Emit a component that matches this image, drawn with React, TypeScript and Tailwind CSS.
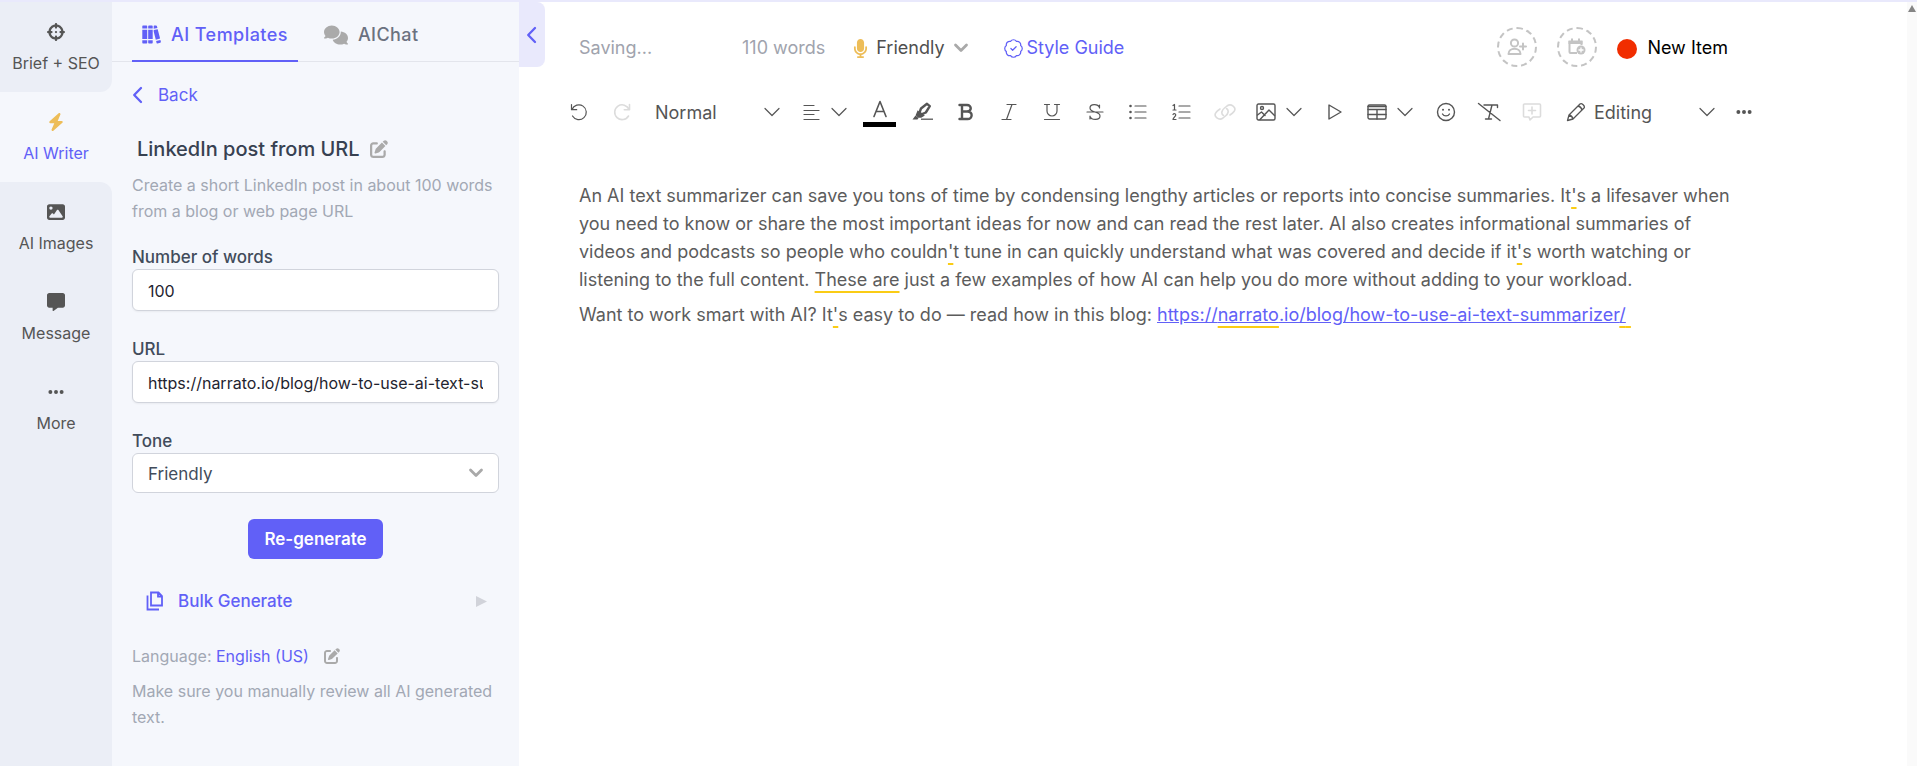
import { useState, type ReactNode } from "react";
import { FaBolt, FaComments, FaCrosshairs, FaImage, FaMessage, FaEllipsis, FaMicrophone } from "react-icons/fa6";
import { LuBadgeCheck } from "react-icons/lu";

function Line({ children, w = 18, h = 18, sw = 1.2, className = "" }: { children: ReactNode; w?: number; h?: number; sw?: number; className?: string }) {
  return (
    <svg width={w} height={h} viewBox={`0 0 ${w} ${h}`} fill="none" stroke="currentColor" strokeWidth={sw} strokeLinecap="round" strokeLinejoin="round" className={`shrink-0 ${className}`} aria-hidden="true">
      {children}
    </svg>
  );
}

const ThinChevron = () => (
  <Line w={16} h={10}>
    <path d="M1 1.5l7 7 7-7" />
  </Line>
);

const BoldChevron = () => (
  <Line w={16} h={10} sw={2.8} className="text-[#a9a9a9]">
    <path d="M2.500 2l5.500 5.500L13.500 2" />
  </Line>
);

const LeftChevron = () => (
  <Line w={11} h={18} sw={2.3}>
    <path d="M9 2L2.200 9 9 16" />
  </Line>
);

const EditIcon = ({ size }: { size: number }) => (
  <svg width={size} height={size} viewBox="0 0 512 512" fill="currentColor" className="shrink-0" aria-hidden="true">
    <path d="M471.6 21.7c-21.9-21.9-57.3-21.9-79.2 0L362.3 51.7l97.9 97.9 30.1-30.1c21.9-21.9 21.9-57.3 0-79.2L471.6 21.7zM172.4 241.7c-6.1 6.1-10.8 13.6-13.5 21.9l-29.6 88.8c-2.9 8.6-.6 18.100 5.800 24.600s15.900 8.700 24.600 5.800l88.800-29.600c8.200-2.700 15.700-7.400 21.900-13.500L437.700 172.300 339.700 74.300 172.400 241.700zM96 64C43 64 0 107 0 160V416c0 53 43 96 96 96H352c53 0 96-43 96-96V320c0-17.700-14.300-32-32-32s-32 14.300-32 32v96c0 17.700-14.300 32-32 32H96c-17.700 0-32-14.300-32-32V160c0-17.700 14.300-32 32-32h96c17.700 0 32-14.300 32-32s-14.300-32-32-32H96z" />
  </svg>
);

const Books = () => (
  <svg width="19" height="19" viewBox="0 0 19 19" fill="currentColor" className="shrink-0" aria-hidden="true">
    <path d="M1 .5h3.500q.7 0 .7.700V3.500H.3V1.200Q.3.500 1 .5zM.3 4.800h4.900v9.200H.3zM.3 15.300h4.900v2.500q0 .7-.7.700H1q-.7 0-.7-.7z" />
    <path d="M7 .5h3q.7 0 .7.700V3.500H6.200V1.200Q6.200.5 7 .5zM6.200 4.800h4.500v9.200H6.200zM6.200 15.300h4.500v2.500q0 .7-.7.700H7q-.8 0-.8-.7z" />
    <path d="M12.200.6l1.800-.2q.7 0 .9.700l.5 2-3.700.6V1.200q0-.6.5-.6zM11.700 5l4-.8 2.400 9.400-4.300 1.100L11.700 6.500zM14.100 15.900l4.300-1 .5 1.900q.1.700-.6.900l-2.800.8q-.7.100-.9-.6z" />
  </svg>
);

const CopyPages = () => (
  <Line w={18} h={20} sw={1.8} className="text-[#6160f7]">
    <path d="M5 1.500h7.500L16 5v9.500H5zM12 1.500V5.500h4" strokeLinejoin="miter" />
    <path d="M1.500 4.500V18.500H13" strokeLinecap="butt" strokeLinejoin="miter" />
  </Line>
);

function Tool({ label, children, className = "", disabled = false }: { label: string; children: ReactNode; className?: string; disabled?: boolean }) {
  return (
    <button type="button" aria-label={label} disabled={disabled} className={`flex h-8 shrink-0 items-center justify-center ${disabled ? "text-[#dcdcdc]" : ""} ${className}`}>
      {children}
    </button>
  );
}

const railItems = [
  { label: "Brief + SEO", icon: <FaCrosshairs size={18} />, shape: "rounded-br-xl" },
  { label: "AI Writer", icon: <FaBolt size={18} className="text-[#edbd58]" />, shape: "" },
  { label: "AI Images", icon: <FaImage size={18} />, shape: "rounded-tr-xl" },
  { label: "Message", icon: <FaMessage size={18} />, shape: "" },
  { label: "More", icon: <FaEllipsis size={18} />, shape: "" },
];

function Rail() {
  return (
    <nav className="flex w-28 shrink-0 flex-col bg-[#f5f7fc]">
      {railItems.map((item) => {
        const active = item.label === "AI Writer";
        return (
          <button key={item.label} type="button" className={`flex h-[90px] shrink-0 flex-col items-center gap-2.5 pt-[21px] text-base leading-6 ${active ? "text-[#6160f7]" : "bg-[#ebeef6] text-[#555]"} ${item.shape}`}>
            {item.icon}
            {item.label}
          </button>
        );
      })}
      <div className="grow bg-[#ebeef6]" />
    </nav>
  );
}

function Panel() {
  const [words, setWords] = useState("100");
  const [url, setUrl] = useState("https://narrato.io/blog/how-to-use-ai-text-summarizer/");
  const field = "w-full rounded-md border border-[#d1d4dc] bg-white px-[15px]";
  const label = "text-[17px] leading-6 font-medium text-[#424c5b]";
  return (
    <section className="w-[407px] shrink-0 bg-[#f5f7fc]">
      <div className="flex h-15 border-b border-[#e3e5ec] px-5 text-[18px] font-medium tracking-wide">
        <button type="button" className="-mb-px flex items-center gap-2.5 border-b-2 border-[#6160f7] px-2.5 pt-1.5 text-[#6160f7]">
          <Books />
          AI Templates
        </button>
        <button type="button" className="flex items-center gap-2.5 px-[26px] pt-1.5 text-[#6b7280]">
          <FaComments size={24} className="text-[#aaa]" />
          AIChat
        </button>
      </div>

      <div className="px-5 pt-[19px]">
        <a href="#back" className="flex items-center gap-[15px] text-[17px] leading-7 text-[#6160f7]">
          <LeftChevron />
          Back
        </a>

        <div className="mt-[26px] flex items-center gap-2.5 pl-[5px]">
          <h1 className="text-xl leading-7 font-medium text-[#374151]">LinkedIn post from URL</h1>
          <button type="button" aria-label="Rename" className="text-[#aaa]">
            <EditIcon size={18} />
          </button>
        </div>
        <p className="mt-[9px] text-base leading-[26px] text-[#a2a8b4]">Create a short LinkedIn post in about 100 words from a blog or web page URL</p>

        <div className="mt-[21px] flex flex-col">
          <label htmlFor="words" className={label}>Number of words</label>
          <input id="words" value={words} onChange={(e) => setWords(e.target.value)} className={`${field} h-[42px] pt-0.5 text-base text-[#1f2430] shadow-xs`} />
        </div>
        <div className="mt-[26px] flex flex-col">
          <label htmlFor="url" className={label}>URL</label>
          <input id="url" value={url} onChange={(e) => setUrl(e.target.value)} className={`${field} h-[42px] pt-0.5 text-base text-[#1f2430] shadow-xs`} />
        </div>
        <div className="mt-[26px] flex flex-col">
          <label htmlFor="tone" className={label}>Tone</label>
          <div className="relative">
            <select id="tone" className={`${field} h-10 appearance-none pt-1 text-[17px] text-[#424c5b]`}>
              <option>Friendly</option>
              <option>Formal</option>
            </select>
            <span className="pointer-events-none absolute inset-y-0 right-[15px] flex items-center">
              <BoldChevron />
            </span>
          </div>
        </div>

        <button type="button" className="mx-auto mt-[26px] block h-10 rounded-md bg-[#6160f7] px-4 pt-0.5 text-[17px] font-semibold text-white">Re-generate</button>

        <button type="button" className="mt-7 flex w-full items-center pr-3 pl-3.5 text-[17px] leading-7 font-medium text-[#6160f7]">
          <CopyPages />
          <span className="ml-3.5">Bulk Generate</span>
          <svg width="11" height="11" viewBox="0 0 11 11" className="ml-auto fill-[#d1d3da]" aria-hidden="true">
            <path d="M0 0l11 5.5L0 11z" />
          </svg>
        </button>

        <div className="mt-7 flex items-center text-base leading-[26px] text-[#a2a8b4]">
          Language:&nbsp;
          <a href="#language" className="text-[#6160f7]">English (US)</a>
          <button type="button" aria-label="Change language" className="ml-[15px] text-[#aaa]">
            <EditIcon size={16} />
          </button>
        </div>
        <p className="mt-[9px] text-base leading-[26px] text-[#a2a8b4]">Make sure you manually review all AI generated text.</p>
      </div>
    </section>
  );
}

function Header() {
  const round = "flex size-10 items-center justify-center rounded-full border-2 border-dashed border-[#c4c4c4] text-[#c4c4c4]";
  return (
    <header className="flex items-center pr-2 text-[18px] leading-7 text-[#a0a3ad]">
      <span className="w-[163px] pt-0.5">Saving...</span>
      <span className="pt-0.5">110 words</span>
      <button type="button" className="ml-[26px] flex items-center pt-0.5 text-[#4f4f4f]">
        <FaMicrophone size={19} className="mr-1.5 text-[#edbd58]" />
        Friendly
        <span className="ml-2">
          <BoldChevron />
        </span>
      </button>
      <a href="#style-guide" className="ml-[34px] flex items-center gap-[3px] pt-0.5 text-[#6160f7]">
        <LuBadgeCheck size={21} strokeWidth={1.4} />
        Style Guide
      </a>
      <div className="ml-auto flex items-center">
        <button type="button" aria-label="Assign a person" className={round}>
          <Line w={20} h={18} sw={2}>
            <circle cx="7.5" cy="5" r="3.6" />
            <path d="M1.5 16c0-7 12-7 12 0zM16 5.5v6M13 8.5h6" />
          </Line>
        </button>
        <button type="button" aria-label="Set a date" className={`${round} ml-5`}>
          <svg width="18" height="18" viewBox="0 0 18 18" fill="none" aria-hidden="true">
            <path d="M9 15H2.5a1 1 0 01-1-1V4h12v3" stroke="currentColor" strokeWidth="2" />
            <path d="M.5 2.500h14V6H.5zM3 .5h2v3H3zM10 .5h2v3h-2z" fill="currentColor" />
            <circle cx="13" cy="12" r="4.500" fill="currentColor" />
            <path d="M13 9.500v5M10.500 12h5" stroke="#fff" strokeWidth="1.300" />
          </svg>
        </button>
        <span className="mt-1 ml-5 size-5 rounded-full bg-[#f12d00]" />
        <span className="ml-2.5 pt-0.5 text-black">New Item</span>
      </div>
    </header>
  );
}

function Toolbar() {
  return (
    <div role="toolbar" aria-label="Formatting" className="flex items-center text-[#555]">
      <Tool label="Undo">
        <Line>
          <path d="M1.500 1.500v5.200h5.200M2 6.500a7.400 7.400 0 11.5 6.500" />
        </Line>
      </Tool>
      <Tool label="Redo" disabled className="ml-[25px]">
        <Line sw={1.6}>
          <path d="M16.500 1.500v5.200h-5.200M16 6.500a7.400 7.400 0 10-.5 6.500" />
        </Line>
      </Tool>
      <button type="button" className="ml-6 flex h-8 w-[125px] shrink-0 items-center justify-between text-[18px]">
        Normal
        <ThinChevron />
      </button>
      <Tool label="Align" className="ml-[23px] gap-2.5">
        <Line>
          <path d="M1 2.500h10M1 7.500h15M1 11.500h10M1 16.500h15" />
        </Line>
        <ThinChevron />
      </Tool>
      <Tool label="Text colour" className="ml-4 w-[33px] flex-col gap-1 pt-0.5">
        <Line w={18} h={18} sw={1.6}>
          <path d="M3 16.500L9 1.500l6 15M5 11.500h8" />
        </Line>
        <span className="h-[5px] w-full shrink-0 bg-black" />
      </Tool>
      <Tool label="Highlight" className="ml-4">
        <svg width="22" height="20" viewBox="0 0 22 20" fill="none" stroke="currentColor" aria-hidden="true">
          <path d="M7.500 10.500L9 6.500 15 1.800l2.800 2.400-4 6.300-4.300 1.800z" strokeWidth="2.400" strokeLinejoin="round" />
          <path d="M6 9.500l5.500 4-2.500 1.500H6.500L4.500 13z" fill="currentColor" strokeWidth="1.500" />
          <path d="M.5 17.500l3-4 3 2.500-1 1.500z" fill="currentColor" stroke="none" />
          <path d="M9 17.200h12" strokeWidth="1.300" />
        </svg>
      </Tool>
      <Tool label="Bold" className="ml-6">
        <Line w={16} h={18} sw={2.4}>
          <path d="M1.500 2h7.500c5 0 5 6.500 0 6.500H4M4 2v14M1.500 16H9.500c5.500 0 5.500-7.500 0-7.500" />
        </Line>
      </Tool>
      <Tool label="Italic" className="ml-[27px]">
        <Line w={16}>
          <path d="M6 1.500h9M1 16.500h9M11 1.500L5.500 16.500" />
        </Line>
      </Tool>
      <Tool label="Underline" className="ml-[26px]">
        <Line>
          <path d="M1.500 1.500h5M11.500 1.500h5M4 1.500v6.500a5 5 0 0010 0V1.500M1.500 16.500h15" />
        </Line>
      </Tool>
      <Tool label="Strikethrough" className="ml-[25px]">
        <Line>
          <path d="M13.500 5V2M13.500 4.500C12 .5 4 .5 4 5c0 2.500 3 3.500 5 4s5 1.500 5 4c0 4.500-8.500 4.500-10 .5M4 13v3M1 9h16" />
        </Line>
      </Tool>
      <Tool label="Bulleted list" className="ml-[25px]">
        <Line>
          <path d="M6 3h11M6 9h11M6 15h11" />
          <path d="M1.500 3h.01M1.500 9h.01M1.500 15h.01" strokeWidth="2.600" />
        </Line>
      </Tool>
      <Tool label="Numbered list" className="ml-6">
        <Line w={20}>
          <path d="M8 3h11M8 9h11M8 15h11" />
          <path d="M2 2.500L3.500 1.500V7M2 7h3M2 11.500c1-1.500 3-.8 2.700.6C4.500 13.500 2 15 2 16.500h3" />
        </Line>
      </Tool>
      <Tool label="Link" disabled className="ml-[22px]">
        <Line w={24} sw={1.6}>
          <path d="M10.500 12.500C7.500 10.500 9 7 11.500 5L14 3c4-3 10 1.500 7 5.500-1 1.500-2.500 2.500-4 3.500" />
          <path d="M13.500 5.500C16.500 7.500 15 11 12.500 13L10 15c-4 3-10-1.500-7-5.500C4 8 5.500 7 7 6" />
        </Line>
      </Tool>
      <Tool label="Image" className="ml-[19px] gap-2.5">
        <Line w={20} sw={1.4}>
          <rect x="1" y="1" width="18" height="16" rx="1.500" />
          <circle cx="6" cy="5" r="1.500" />
          <path d="M1.500 12l4-3 3.500 3.500M4 16.500L13 7l5.500 5.500" />
        </Line>
        <ThinChevron />
      </Tool>
      <Tool label="Play" className="ml-[25px]">
        <Line w={16} sw={1.4}>
          <path d="M2 2v14l12-7z" />
        </Line>
      </Tool>
      <Tool label="Table" className="ml-6 gap-2.5">
        <Line w={20} sw={1.4}>
          <rect x="1" y="2" width="18" height="14" rx="1.500" />
          <path d="M1 3.500h18M1 6.500h18M1 11.500h18M10 6.500V16" />
        </Line>
        <ThinChevron />
      </Tool>
      <Tool label="Emoji" className="ml-[23px]">
        <Line w={20} h={20} sw={1.4}>
          <circle cx="10" cy="10" r="8.500" />
          <path d="M6.500 12c1.500 2.500 5.500 2.500 7 0" />
          <path d="M7 7.800h.01M13 7.800h.01" strokeWidth="2" />
        </Line>
      </Tool>
      <Tool label="Clear formatting" className="ml-[21px]">
        <Line w={24} h={20} sw={1.4}>
          <path d="M1.500 1.500L23 18.500M7 3h13.500v2.500M15 3l-3.500 14M8.500 17h6" />
        </Line>
      </Tool>
      <Tool label="Comment" disabled className="ml-[21px]">
        <Line w={20} h={20} sw={1.6}>
          <path d="M2.500 2h15a1 1 0 011 1v11a1 1 0 01-1 1H11l-3 3-1-3H2.500a1 1 0 01-1-1V3a1 1 0 011-1zM10 5v7M6.500 8.500h7" />
        </Line>
      </Tool>
      <button type="button" className="ml-6 flex h-8 w-[149px] shrink-0 items-center text-[18px]">
        <Line w={20} h={20} sw={1.3} className="mr-2">
          <path d="M1.500 18.500L3 13 14 2c1.500-1.500 5.500 2 4 4L7 17zM3 13c2 .5 3.500 2 4 4M12 4c2 .5 3.500 2 4 4" />
        </Line>
        Editing
        <span className="ml-auto">
          <ThinChevron />
        </span>
      </button>
      <Tool label="More tools" className="ml-5">
        <FaEllipsis size={18} />
      </Tool>
    </div>
  );
}

const Mark = ({ children }: { children: ReactNode }) => (
  <span className="underline decoration-[#facc15] decoration-2 underline-offset-[5px] [text-decoration-skip-ink:none]">{children}</span>
);

function Article() {
  return (
    <article className="flex flex-col gap-[7px] text-[18px] leading-7 text-[#5c5c5c]">
      <p>
        An AI text summarizer can save you tons of time by condensing lengthy articles or reports into concise summaries. It<Mark>'</Mark>s a lifesaver when you need to know or share the most important ideas for now and can read the rest later. AI also creates informational summaries of videos and podcasts so people who couldn<Mark>'</Mark>t tune in can quickly understand what was covered and decide if it<Mark>'</Mark>s worth watching or listening to the full content. <Mark>These are</Mark> just a few examples of how AI can help you do more without adding to your workload.
      </p>
      <p>
        Want to work smart with AI? It<Mark>'</Mark>s easy to do — read how in this blog:{" "}
        <a href="https://narrato.io/blog/how-to-use-ai-text-summarizer/" className="text-[#6160f7] underline">
          https://<Mark>narrato</Mark>.io/blog/how-to-use-ai-text-summarizer<Mark>/</Mark>
        </a>
        <Mark>&nbsp;</Mark>
      </p>
    </article>
  );
}

export default function App() {
  return (
    <div className="flex min-h-screen border-t-2 border-[#e9e9fc] bg-white font-['Inter',sans-serif]">
      <Rail />
      <Panel />
      <button type="button" aria-label="Collapse panel" className="flex h-[65px] w-[26px] shrink-0 items-center justify-center rounded-r-lg bg-[#e9e9fc] pr-0.5 text-[#6160f7]">
        <LeftChevron />
      </button>
      <main className="min-w-0 grow pt-[25px] pr-[171px] pl-[34px]">
        <Header />
        <div className="-ml-[9px] mt-[29px]">
          <Toolbar />
        </div>
        <div className="mt-[54px]">
          <Article />
        </div>
      </main>
      <div className="flex w-2.5 shrink-0 justify-center bg-[#fafafa] pt-[3px]">
        <svg width="8" height="7" viewBox="0 0 8 7" className="fill-[#858585]" aria-hidden="true">
          <path d="M4 0l4 7H0z" />
        </svg>
      </div>
    </div>
  );
}
